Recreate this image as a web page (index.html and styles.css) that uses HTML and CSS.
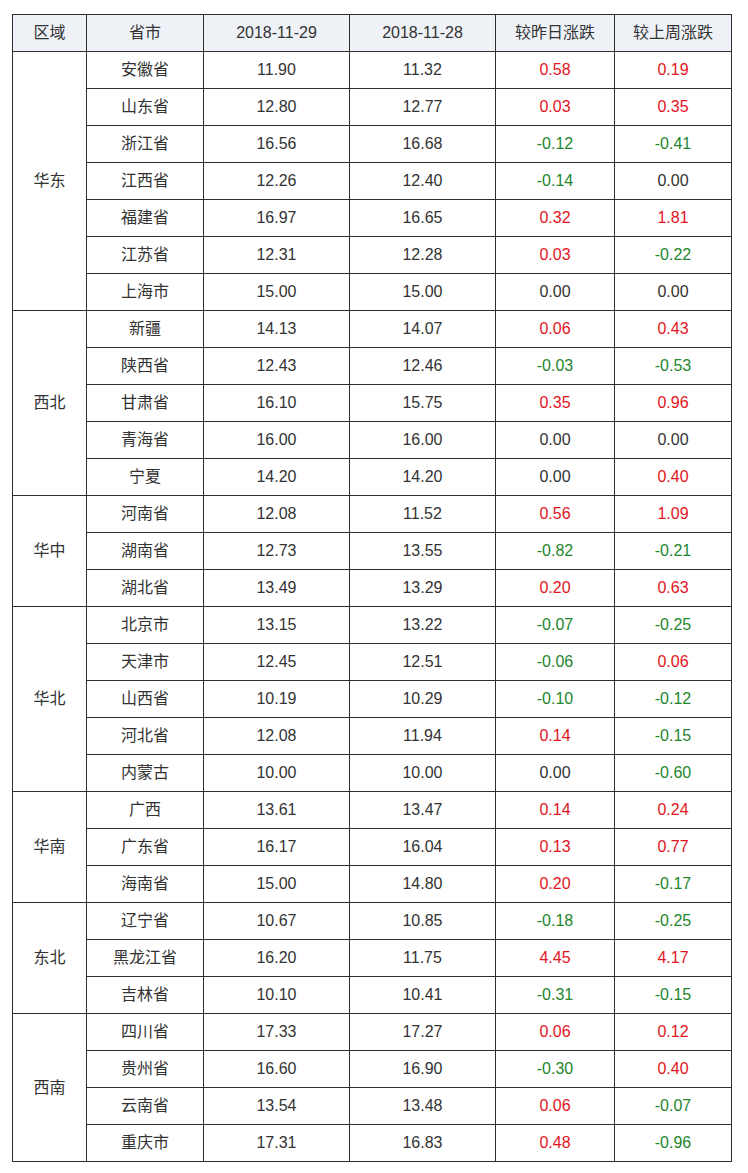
FILE: index.html
```html
<!DOCTYPE html>
<html lang="zh">
<head>
<meta charset="utf-8">
<title>猪价</title>
<link rel="stylesheet" href="styles.css">
</head>
<body>
<table class="price-table">
<colgroup>
<col class="c-region"><col class="c-prov"><col class="c-date"><col class="c-date"><col class="c-chg1"><col class="c-chg2">
</colgroup>
<thead>
<tr><th>区域</th><th>省市</th><th>2018-11-29</th><th>2018-11-28</th><th>较昨日涨跌</th><th>较上周涨跌</th></tr>
</thead>
<tbody>
<tr><td rowspan="7">华东</td><td>安徽省</td><td>11.90</td><td>11.32</td><td class="up">0.58</td><td class="up">0.19</td></tr>
<tr><td>山东省</td><td>12.80</td><td>12.77</td><td class="up">0.03</td><td class="up">0.35</td></tr>
<tr><td>浙江省</td><td>16.56</td><td>16.68</td><td class="down">-0.12</td><td class="down">-0.41</td></tr>
<tr><td>江西省</td><td>12.26</td><td>12.40</td><td class="down">-0.14</td><td>0.00</td></tr>
<tr><td>福建省</td><td>16.97</td><td>16.65</td><td class="up">0.32</td><td class="up">1.81</td></tr>
<tr><td>江苏省</td><td>12.31</td><td>12.28</td><td class="up">0.03</td><td class="down">-0.22</td></tr>
<tr><td>上海市</td><td>15.00</td><td>15.00</td><td>0.00</td><td>0.00</td></tr>
<tr><td rowspan="5">西北</td><td>新疆</td><td>14.13</td><td>14.07</td><td class="up">0.06</td><td class="up">0.43</td></tr>
<tr><td>陕西省</td><td>12.43</td><td>12.46</td><td class="down">-0.03</td><td class="down">-0.53</td></tr>
<tr><td>甘肃省</td><td>16.10</td><td>15.75</td><td class="up">0.35</td><td class="up">0.96</td></tr>
<tr><td>青海省</td><td>16.00</td><td>16.00</td><td>0.00</td><td>0.00</td></tr>
<tr><td>宁夏</td><td>14.20</td><td>14.20</td><td>0.00</td><td class="up">0.40</td></tr>
<tr><td rowspan="3">华中</td><td>河南省</td><td>12.08</td><td>11.52</td><td class="up">0.56</td><td class="up">1.09</td></tr>
<tr><td>湖南省</td><td>12.73</td><td>13.55</td><td class="down">-0.82</td><td class="down">-0.21</td></tr>
<tr><td>湖北省</td><td>13.49</td><td>13.29</td><td class="up">0.20</td><td class="up">0.63</td></tr>
<tr><td rowspan="5">华北</td><td>北京市</td><td>13.15</td><td>13.22</td><td class="down">-0.07</td><td class="down">-0.25</td></tr>
<tr><td>天津市</td><td>12.45</td><td>12.51</td><td class="down">-0.06</td><td class="up">0.06</td></tr>
<tr><td>山西省</td><td>10.19</td><td>10.29</td><td class="down">-0.10</td><td class="down">-0.12</td></tr>
<tr><td>河北省</td><td>12.08</td><td>11.94</td><td class="up">0.14</td><td class="down">-0.15</td></tr>
<tr><td>内蒙古</td><td>10.00</td><td>10.00</td><td>0.00</td><td class="down">-0.60</td></tr>
<tr><td rowspan="3">华南</td><td>广西</td><td>13.61</td><td>13.47</td><td class="up">0.14</td><td class="up">0.24</td></tr>
<tr><td>广东省</td><td>16.17</td><td>16.04</td><td class="up">0.13</td><td class="up">0.77</td></tr>
<tr><td>海南省</td><td>15.00</td><td>14.80</td><td class="up">0.20</td><td class="down">-0.17</td></tr>
<tr><td rowspan="3">东北</td><td>辽宁省</td><td>10.67</td><td>10.85</td><td class="down">-0.18</td><td class="down">-0.25</td></tr>
<tr><td>黑龙江省</td><td>16.20</td><td>11.75</td><td class="up">4.45</td><td class="up">4.17</td></tr>
<tr><td>吉林省</td><td>10.10</td><td>10.41</td><td class="down">-0.31</td><td class="down">-0.15</td></tr>
<tr><td rowspan="4">西南</td><td>四川省</td><td>17.33</td><td>17.27</td><td class="up">0.06</td><td class="up">0.12</td></tr>
<tr><td>贵州省</td><td>16.60</td><td>16.90</td><td class="down">-0.30</td><td class="up">0.40</td></tr>
<tr><td>云南省</td><td>13.54</td><td>13.48</td><td class="up">0.06</td><td class="down">-0.07</td></tr>
<tr><td>重庆市</td><td>17.31</td><td>16.83</td><td class="up">0.48</td><td class="down">-0.96</td></tr>
</tbody>
</table>
</body>
</html>
```

FILE: styles.css
```css
html, body {
  margin: 0;
  padding: 0;
  background: #ffffff;
}
body {
  padding: 14px 0 0 12px;
  font-family: "Liberation Sans", Arial, "Noto Sans CJK SC", sans-serif;
  font-size: 16px;
  color: #333333;
}
.price-table {
  border-collapse: collapse;
  table-layout: fixed;
  width: 719px;
}
.c-region { width: 74px; }
.c-prov { width: 117px; }
.c-date { width: 146px; }
.c-chg1 { width: 119px; }
.c-chg2 { width: 117px; }
.price-table th,
.price-table td {
  border: 1px solid #2e2e2e;
  height: 36px;
  padding: 0;
  text-align: center;
  vertical-align: middle;
  font-weight: normal;
  line-height: 20px;
}
.price-table th {
  background: #eef2f7;
}
.price-table .up { color: #e3141e; }
.price-table .down { color: #23862d; }
```
